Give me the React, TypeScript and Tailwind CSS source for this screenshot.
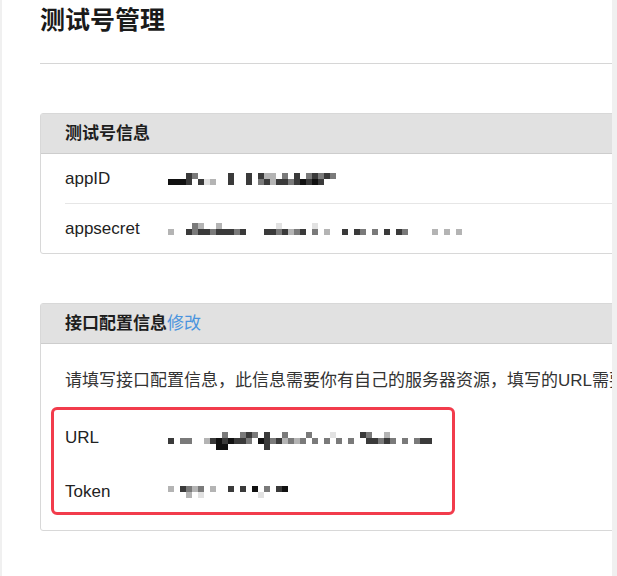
import React from "react";

const SH: Record<string, string> = {
  "@": "#111111",
  "#": "#3a3a3a",
  "+": "#7a7a7a",
  ":": "#b4b4b4",
  ".": "#e2e2e2",
};

function Mosaic({ rows }: { rows: string[] }) {
  const cols = Math.max(...rows.map((r) => r.length));
  return (
    <svg width={cols * 6} height={rows.length * 6} className="block shrink-0">
      {rows.flatMap((r, ri) =>
        r.split("").map((c, ci) =>
          SH[c] ? (
            <rect key={ri + "-" + ci} x={ci * 6} y={ri * 6} width={6} height={6} fill={SH[c]} />
          ) : null
        )
      )}
    </svg>
  );
}

const font = "font-['Liberation_Sans','Noto_Sans_CJK_SC',sans-serif]";

export default function App() {
  return (
    <div className={`flex h-screen w-full overflow-hidden bg-[#f0f0f0] text-[#222] ${font}`}>
      <div className="w-[2px] shrink-0 bg-[#f0f0f0]" />
      <div className="w-[610px] shrink-0 overflow-hidden bg-white pl-[38px]">
        <div className="w-[640px]">
          <h1 className="text-[25px] font-bold leading-[36px] text-[#1a1a1a] font-['Noto_Sans_CJK_SC',sans-serif]">
            测试号管理
          </h1>
          <div className="mt-[27px] h-px bg-[#d6d6d6]" />

          {/* Panel 1 */}
          <div className="mt-[49px] rounded-[3px] border border-[#d8d8d8]">
            <div className="flex h-[40px] items-center border-b border-[#cdcdcd] bg-[#e1e1e1] pl-[24px] text-[17px] font-bold text-[#1e1e1e]">
              测试号信息
            </div>
            <div className="ml-[24px] text-[17px]">
              <div className="flex h-[50px] items-center border-b border-[#e6e6e6]">
                <div className="w-[103px] shrink-0">appID</div>
                <Mosaic
                  rows={[
                    "   #+     #  # #:: + # +#+#+",
                    "@@@# #.:  #  # +#:##+#@#@#",
                  ]}
                />
              </div>
              <div className="flex h-[49px] items-center">
                <div className="w-[103px] shrink-0">appsecret</div>
                <Mosaic
                  rows={[
                    "    +:  :         .     .",
                    ":  #+##+###+#   ##+#:+# + :  # #+ + # #+    : : :",
                  ]}
                />
              </div>
            </div>
          </div>

          {/* Panel 2 */}
          <div className="mt-[49px] rounded-[3px] border border-[#d8d8d8]">
            <div className="flex h-[40px] items-center border-b border-[#cdcdcd] bg-[#e1e1e1] pl-[24px] text-[17px] font-bold text-[#1e1e1e]">
              接口配置信息<span className="font-normal text-[#4a94de]">修改</span>
            </div>
            <div className="pl-[10px] pt-[26px] pb-[15px]">
              <div className="ml-[14px] whitespace-nowrap text-[17px] leading-[22px] text-[#333]">
                请填写接口配置信息，此信息需要你有自己的服务器资源，填写的URL需要正确响应微信发送的Token验证，请阅读消息接口使用指南。
              </div>
              <div className="mt-[15px] w-[404px] rounded-[6px] border-[3px] border-[#f23c4c] pl-[11px] pt-[9px] pb-[1px] text-[17px]">
                <div className="flex h-[38px] items-center">
                  <div className="w-[103px] shrink-0">URL</div>
                  <Mosaic
                    rows={[
                      "",
                      "         +  +#+ #  +   +   .    #+  :",
                      "# ++  :#@#@##+ @#+#:+:+ + + + +  ##+#+ + +##",
                      "        @@      #",
                    ]}
                  />
                </div>
                <div className="mt-[16px] flex h-[38px] items-center">
                  <div className="w-[103px] shrink-0">Token</div>
                  <Mosaic
                    rows={[
                      ": #+:+ :  # # @ + #@",
                      "   : .         .   ",
                    ]}
                  />
                </div>
              </div>
            </div>
          </div>
        </div>
      </div>
      <div className="flex-1 bg-[#f0f0f0]" />
    </div>
  );
}
